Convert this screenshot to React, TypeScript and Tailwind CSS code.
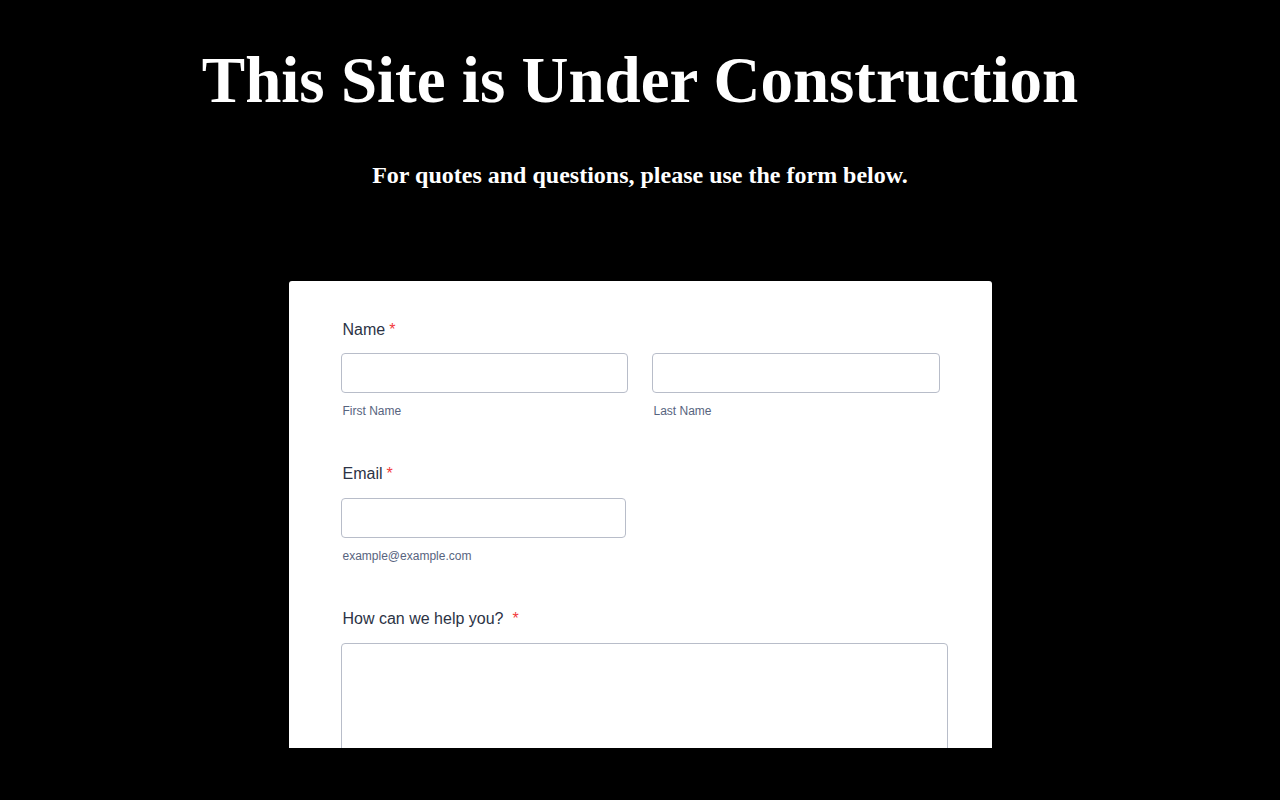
import React from 'react';

const labelCls = "block text-[16px] leading-[20px] text-[#2c3345]";
const subCls = "block mt-[10px] ml-[2px] text-[12px] leading-[16px] text-[#57647e]";
const inputCls = "block h-[40px] w-full rounded-[4px] border border-[#b8bdc9] bg-white";

const Req: React.FC = () => <span className="ml-[4px] text-[#f23a3c]">*</span>;

export default function App() {
  return (
    <div className="min-h-[800px] w-full bg-black" style={{ fontFamily: '"Liberation Sans", Arial, sans-serif' }}>
      <header className="pt-[40px] text-center text-white" style={{ fontFamily: '"Liberation Serif", "Times New Roman", serif' }}>
        <h1 className="text-[65px] font-bold leading-[80px]">This Site is Under Construction</h1>
        <p className="mt-[40px] text-[24px] font-bold leading-[30px]">For quotes and questions, please use the form below.</p>
      </header>

      <div className="mx-auto mt-[91px] h-[467px] w-[703px] overflow-hidden rounded-t-[3px] bg-white">
        <div className="pl-[54px] pr-[44px] pt-[39px]">
          {/* Name */}
          <div>
            <label className={labelCls}>Name<Req /></label>
            <div className="mt-[13px] -ml-[2px] flex gap-[24px]">
              <div className="w-[287px]">
                <div className={inputCls}></div>
                <span className={subCls}>First Name</span>
              </div>
              <div className="w-[288px]">
                <div className={inputCls}></div>
                <span className={subCls}>Last Name</span>
              </div>
            </div>
          </div>

          {/* Email */}
          <div className="mt-[45px]">
            <label className={labelCls}>Email<Req /></label>
            <div className="mt-[14px] -ml-[2px] w-[285px]">
              <div className={inputCls}></div>
              <span className={subCls}>example@example.com</span>
            </div>
          </div>

          {/* Message */}
          <div className="mt-[45px]">
            <label className={labelCls}>How can we help you?<span className="ml-[9px] text-[#f23a3c]">*</span></label>
            <div className="mt-[14px] -ml-[2px] h-[160px] rounded-[4px] border border-[#b8bdc9] bg-white"></div>
          </div>
        </div>
      </div>
    </div>
  );
}
